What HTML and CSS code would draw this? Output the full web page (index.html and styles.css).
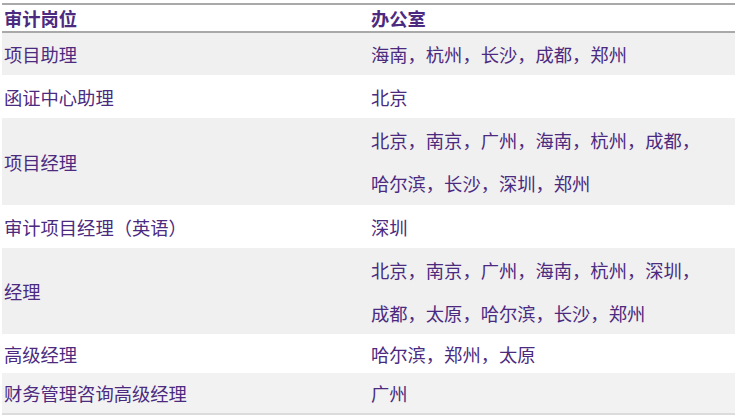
FILE: index.html
```html
<!DOCTYPE html>
<html lang="zh-CN">
<head>
<meta charset="utf-8">
<title>审计岗位</title>
<link rel="stylesheet" href="styles.css">
</head>
<body>
<table class="jobs">
  <thead>
    <tr><th class="c1">审计岗位</th><th>办公室</th></tr>
  </thead>
  <tbody>
    <tr class="odd r42"><td class="c1">项目助理</td><td>海南，杭州，长沙，成都，郑州</td></tr>
    <tr class="r43"><td class="c1">函证中心助理</td><td>北京</td></tr>
    <tr class="odd two r87"><td class="c1">项目经理</td><td>北京，南京，广州，海南，杭州，成都，<br>哈尔滨，长沙，深圳，郑州</td></tr>
    <tr class="r43"><td class="c1">审计项目经理（英语）</td><td>深圳</td></tr>
    <tr class="odd two r86"><td class="c1">经理</td><td>北京，南京，广州，海南，杭州，深圳，<br>成都，太原，哈尔滨，长沙，郑州</td></tr>
    <tr class="r39"><td class="c1">高级经理</td><td>哈尔滨，郑州，太原</td></tr>
    <tr class="odd last r40"><td class="c1">财务管理咨询高级经理</td><td>广州</td></tr>
  </tbody>
</table>
</body>
</html>
```
FILE: styles.css
```css
html, body {
  background: #ffffff;
}
body {
  margin: 3px 0 0 2px;
  font-family: "Microsoft YaHei", "Noto Sans CJK SC", "Noto Sans", sans-serif;
  color: #4b2a80;
}
.jobs {
  width: 733px;
  border-collapse: collapse;
  border-top: 2px solid #a9a9a9;
  font-size: 18.3px;
}
.jobs th {
  text-align: left;
  font-weight: bold;
  line-height: 26px;
  padding: 0 2px;
  border-bottom: 2px solid #a9a9a9;
}
.jobs td {
  line-height: 40px;
  padding: 1px 2px 0 2px;
  vertical-align: middle;
}
.jobs tr.r42 td { line-height: 41px; }
.jobs tr.r43 td { line-height: 42px; }
.jobs tr.r39 td { line-height: 38px; }
.jobs tr.r40 td { line-height: 39px; }
.jobs tr.r87 td { line-height: 43px; }
.jobs tr.r86 td { line-height: 42.5px; }
.jobs .c1 {
  width: 363px;
}
.jobs tr.odd td {
  background: #f0f0f0;
}
.jobs tr.last td {
  background: #f2f2f2;
  border-bottom: 2px solid #dcdcdc;
}
```
